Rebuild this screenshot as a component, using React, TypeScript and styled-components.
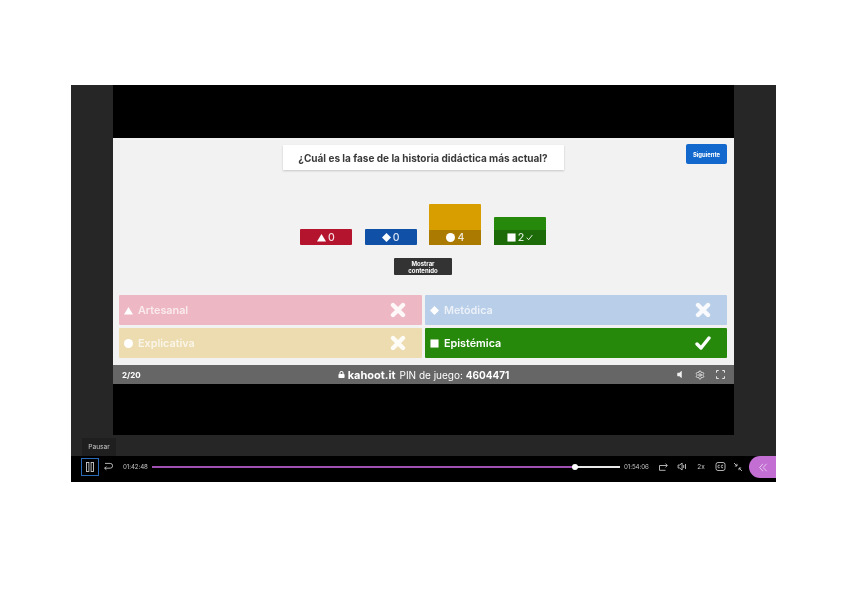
import React from "react"
import styled, { createGlobalStyle } from "styled-components"
import { FaLock, FaVolumeOff } from "react-icons/fa"
import { Settings } from "lucide-react"

type Shape = "triangle" | "diamond" | "circle" | "square"

const GlobalStyle = createGlobalStyle`
  html, body {
    margin: 0;
    background: #fff;
    font-family: "Inter", "Liberation Sans", sans-serif;
  }
`

const Page = styled.div`
  width: 848px;
  height: 599px;
  padding: 85px 0 0 71px;
  box-sizing: border-box;
  overflow: hidden;
`

const Player = styled.div`
  position: relative;
  width: 705px;
  height: 397px;
  display: flex;
  flex-direction: column;
  background: #000;
  filter: blur(0.55px);
`

const Theatre = styled.div`
  height: 371px;
  padding: 0 42px;
  background: #262626;
  flex-shrink: 0;
`

const Stage = styled.div`
  height: 350px;
  display: flex;
  flex-direction: column;
  background: #000;
  padding-top: 53px;
  box-sizing: border-box;
`

const Slide = styled.div`
  height: 227px;
  flex-shrink: 0;
  padding: 6px 7px 7px 6px;
  box-sizing: border-box;
  background: #f2f2f2;
  display: flex;
  flex-direction: column;
`

const Header = styled.div`
  display: grid;
  grid-template-columns: 1fr 280px 1fr;
  align-items: start;
  padding-left: 1px;
`

const Question = styled.h1`
  grid-column: 2;
  margin: 1px 0 0 -1px;
  height: 25px;
  background: #fff;
  box-shadow: 0 1px 2px rgba(0, 0, 0, 0.18);
  display: flex;
  align-items: center;
  justify-content: center;
  font-size: 10px;
  font-weight: 700;
  color: #3a3a3a;
  white-space: nowrap;
`

const NextButton = styled.button`
  justify-self: end;
  width: 41px;
  height: 20px;
  padding: 0;
  border: 0;
  border-radius: 2px;
  background: #1368ce;
  color: #fff;
  font: 700 5.9px "Inter", sans-serif;
`

const Chart = styled.div`
  height: 67px;
  margin-top: 8px;
  display: flex;
  align-items: flex-end;
  justify-content: center;
  gap: 12.7px;
`

const Bar = styled.div<{ $h: number; $color: string }>`
  width: 52px;
  height: ${(p) => p.$h}px;
  border-radius: 1px;
  background: ${(p) => p.$color};
  display: flex;
  flex-direction: column;
  justify-content: flex-end;
`

const BarLabel = styled.div<{ $color?: string }>`
  height: 15px;
  display: flex;
  align-items: center;
  justify-content: center;
  gap: 2px;
  background: ${(p) => p.$color ?? "transparent"};
  color: rgba(255, 255, 255, 0.85);
  font-size: 10.5px;
  font-weight: 500;
`

const ContentToggle = styled.div`
  align-self: center;
  width: 58px;
  height: 17px;
  margin-top: 13px;
  border-radius: 1px;
  background: #333;
  color: #fff;
  font-size: 6px;
  line-height: 7px;
  font-weight: 700;
  text-align: center;
  padding-top: 2px;
  box-sizing: border-box;
`

const Answers = styled.div`
  margin-top: 20px;
  display: grid;
  grid-template-columns: 303px 302px;
  grid-auto-rows: 30px;
  justify-content: end;
  gap: 3px;
`

const Answer = styled.div<{ $bg: string; $strong?: boolean }>`
  display: flex;
  align-items: center;
  gap: 5px;
  padding: 0 16px 0 5px;
  border-radius: 1px;
  background: ${(p) => p.$bg};
  color: ${(p) => (p.$strong ? "#fff" : "rgba(255, 255, 255, 0.72)")};
  font-size: 10.8px;
  font-weight: 600;
`

const AnswerText = styled.span`
  flex: 1;
`

const StatusBar = styled.div`
  height: 19px;
  background: #666;
  color: #fff;
  display: grid;
  grid-template-columns: 1fr auto 1fr;
  align-items: center;
  padding: 0 9px;
  font-size: 10px;
`

const Count = styled.span`
  font-weight: 700;
  font-size: 8px;
`

const Pin = styled.div`
  display: flex;
  align-items: center;
  gap: 3px;
  white-space: nowrap;
  b {
    font-weight: 700;
  }
`

const Host = styled.b`
  font-size: 11px;
  margin-right: 1px;
`

const StatusIcons = styled.div`
  justify-self: end;
  display: flex;
  align-items: center;
  gap: 11px;
  opacity: 0.9;
`

const Controls = styled.div`
  height: 26px;
  display: flex;
  align-items: flex-start;
  color: #c4c4c4;
  font-size: 6px;
`

const PauseButton = styled.button`
  width: 18px;
  height: 18px;
  margin: 2px 0 0 10px;
  padding: 0;
  border: 1px solid #2b6cb8;
  background: transparent;
  color: #ccc;
  display: flex;
  align-items: center;
  justify-content: center;
`

const Tip = styled.div`
  position: absolute;
  left: 11px;
  top: 353px;
  width: 34px;
  height: 18px;
  background: #1f1f1f;
  color: #ccc;
  font-size: 6.6px;
  display: flex;
  align-items: center;
  justify-content: center;
`

const Time = styled.span<{ $w: number; $pad?: number }>`
  width: ${(p) => p.$w}px;
  padding-left: ${(p) => p.$pad ?? 0}px;
  box-sizing: border-box;
  height: 21px;
  line-height: 21px;
  flex-shrink: 0;
  font-size: 6.2px;
  letter-spacing: -0.1px;
`

const Track = styled.div`
  position: relative;
  width: 468px;
  height: 2px;
  margin: 10px 4px 0 0;
  flex-shrink: 0;
  background: #e8e8e8;
`

const Played = styled.div`
  height: 100%;
  background: #a050b0;
`

const Knob = styled.span`
  position: absolute;
  top: -2px;
  width: 6px;
  height: 6px;
  margin-left: -3px;
  border-radius: 50%;
  background: #fff;
`

const ControlSlot = styled.div<{ $w: number }>`
  width: ${(p) => p.$w}px;
  height: 21px;
  flex-shrink: 0;
  display: flex;
  align-items: center;
  justify-content: center;
  font-size: 6.5px;
`

const Drawer = styled.div`
  width: 27px;
  height: 22px;
  margin-left: auto;
  border-radius: 11px 0 0 11px;
  background: #c26ed2;
  color: #e6c8ee;
  display: flex;
  align-items: center;
  justify-content: center;
`

const ShapeIcon = ({ shape, size = 9 }: { shape: Shape; size?: number }) => (
  <svg width={size} height={size} viewBox="0 0 10 10" fill="#fff">
    {shape === "triangle" && <path d="M5 1 10 9.5H0z" />}
    {shape === "diamond" && <path d="M5 0 10 5 5 10 0 5z" />}
    {shape === "circle" && <circle cx="5" cy="5" r="5" />}
    {shape === "square" && <rect x="0.5" y="0.5" width="9" height="9" />}
  </svg>
)

const CrossIcon = () => (
  <svg width="16" height="16" viewBox="0 0 16 16" fill="none" stroke="rgba(255,255,255,.9)" strokeWidth="4.4" strokeLinecap="round">
    <path d="M3 3l10 10M13 3 3 13" />
  </svg>
)

const CheckIcon = ({ size = 16, width = 3.4 }: { size?: number; width?: number }) => (
  <svg width={size} height={size} viewBox="0 0 16 16" fill="none" stroke="#fff" strokeWidth={width} strokeLinecap="round" strokeLinejoin="round">
    <path d="M2 9l4 4 8-10" />
  </svg>
)

const bars = [
  { shape: "triangle" as Shape, count: "0", h: 16, color: "#b5142f" },
  { shape: "diamond" as Shape, count: "0", h: 16, color: "#1050a6" },
  { shape: "circle" as Shape, count: "4", h: 41, color: "#d89e00", dark: "#ab7a00" },
  { shape: "square" as Shape, count: "2", h: 28, color: "#26890c", dark: "#1c6b08", correct: true },
]

const answers = [
  { shape: "triangle" as Shape, text: "Artesanal", bg: "#edb8c4" },
  { shape: "diamond" as Shape, text: "Metódica", bg: "#b9cee8" },
  { shape: "circle" as Shape, text: "Explicativa", bg: "#ecdcb0" },
  { shape: "square" as Shape, text: "Epistémica", bg: "#26890c", correct: true },
]

export default function App() {
  return (
    <Page>
      <GlobalStyle />
      <Player>
        <Theatre>
          <Stage>
            <Slide>
              <Header>
                <Question>¿Cuál es la fase de la historia didáctica más actual?</Question>
                <NextButton>Siguiente</NextButton>
              </Header>
              <Chart>
                {bars.map((b) => (
                  <Bar key={b.shape} $h={b.h} $color={b.color}>
                    <BarLabel $color={b.dark}>
                      <ShapeIcon shape={b.shape} />
                      {b.count}
                      {b.correct && <CheckIcon size={7} width={2} />}
                    </BarLabel>
                  </Bar>
                ))}
              </Chart>
              <ContentToggle>
                Mostrar
                <br />
                contenido
              </ContentToggle>
              <Answers>
                {answers.map((a) => (
                  <Answer key={a.text} $bg={a.bg} $strong={a.correct}>
                    <ShapeIcon shape={a.shape} />
                    <AnswerText>{a.text}</AnswerText>
                    {a.correct ? <CheckIcon /> : <CrossIcon />}
                  </Answer>
                ))}
              </Answers>
            </Slide>
            <StatusBar>
              <Count>2/20</Count>
              <Pin>
                <FaLock size={7} />
                <Host>kahoot.it</Host>
                <span>
                  PIN de juego: <b>4604471</b>
                </span>
              </Pin>
              <StatusIcons>
                <FaVolumeOff size={9} />
                <Settings size={10} />
                <svg width="9" height="9" viewBox="0 0 10 10" fill="none" stroke="#fff" strokeWidth="1.1">
                  <path d="M.6 3V.6H3M7 .6h2.4V3M9.4 7v2.4H7M3 9.4H.6V7" />
                </svg>
              </StatusIcons>
            </StatusBar>
          </Stage>
        </Theatre>
        <Controls>
          <PauseButton aria-label="Pausar">
            <svg width="8" height="10" viewBox="0 0 8 10" fill="none" stroke="currentColor" strokeWidth="0.9">
              <rect x="0.5" y="0.5" width="2.4" height="9" />
              <rect x="5.1" y="0.5" width="2.4" height="9" />
            </svg>
          </PauseButton>
          <ControlSlot $w={18}>
            <svg width="10" height="9" viewBox="0 0 10 9" fill="none" stroke="currentColor" strokeWidth="0.9">
              <path d="M2 1.4h5.2a2.2 2.2 0 0 1 0 4.8H1.6M3.4 4.6 1.6 6.2l1.8 1.6" />
            </svg>
          </ControlSlot>
          <Time $w={35} $pad={6}>01:42:48</Time>
          <Track>
            <Played style={{ width: `${(423 / 468) * 100}%` }} />
            <Knob style={{ left: `${(423 / 468) * 100}%` }} />
          </Track>
          <Time $w={29}>01:54:06</Time>
          <ControlSlot $w={20}>
            <svg width="11" height="9" viewBox="0 0 10 9" fill="none" stroke="currentColor" strokeWidth="0.9">
              <path d="M8.5 3.5H1v4.8h6M7 1.6l1.8 1.9L7 5.4" />
            </svg>
          </ControlSlot>
          <ControlSlot $w={18}>
            <svg width="11" height="9" viewBox="0 0 10 9" fill="none" stroke="currentColor" strokeWidth="0.9">
              <path d="M.6 3v3h1.6L4.6 8V1L2.2 3zM6.2 3v3M8 2v5" />
            </svg>
          </ControlSlot>
          <ControlSlot $w={20}>2x</ControlSlot>
          <ControlSlot $w={18}>
            <svg width="11" height="9" viewBox="0 0 10 9" fill="none" stroke="currentColor" strokeWidth="0.9">
              <rect x="0.5" y="0.5" width="9" height="8" rx="2" />
              <path d="M4.2 3.3a1.3 1.3 0 1 0 0 2.4M7.6 3.3a1.3 1.3 0 1 0 0 2.4" />
            </svg>
          </ControlSlot>
          <ControlSlot $w={18}>
            <svg width="10" height="10" viewBox="0 0 10 10" fill="none" stroke="currentColor" strokeWidth="0.9">
              <path d="M1 1l3 3M4 1.8V4H1.8M9 9 6 6M6 8.2V6h2.2" />
            </svg>
          </ControlSlot>
          <Drawer>
            <svg width="10" height="9" viewBox="0 0 10 9" fill="none" stroke="currentColor" strokeWidth="1">
              <path d="M5 .8 1.6 4.5 5 8.2M8.6.8 5.2 4.5l3.4 3.7" />
            </svg>
          </Drawer>
        </Controls>
        <Tip>Pausar</Tip>
      </Player>
    </Page>
  )
}
